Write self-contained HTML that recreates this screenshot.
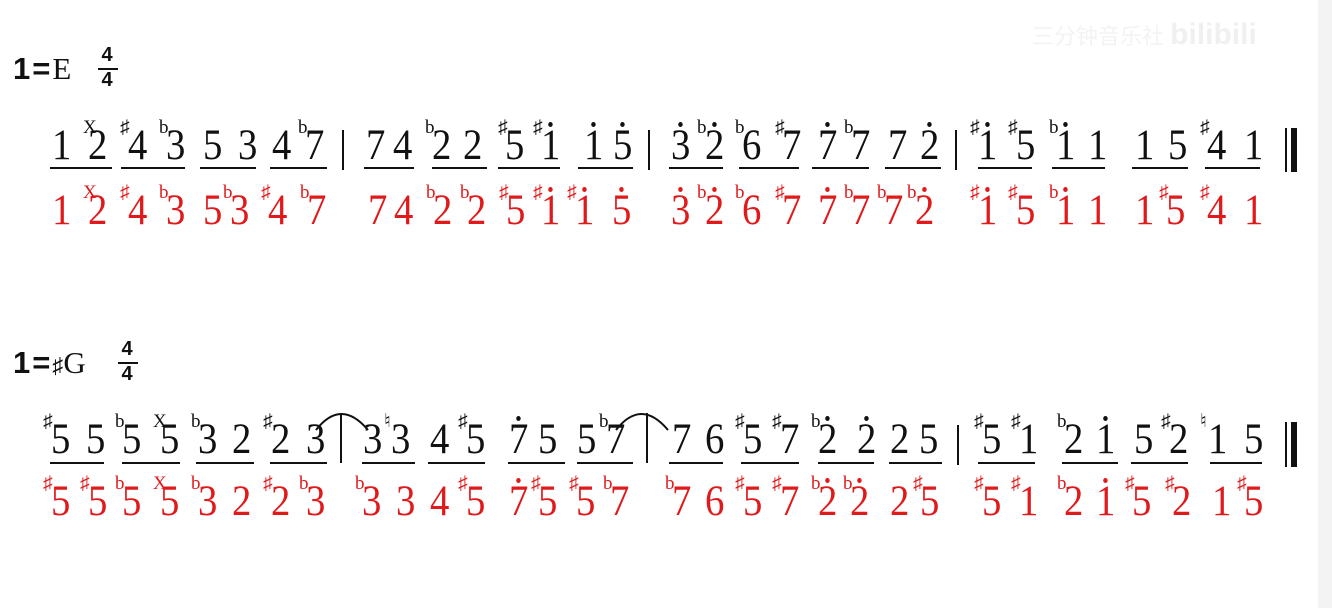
<!DOCTYPE html>
<html><head><meta charset="utf-8"><style>
html,body{margin:0;padding:0}
body{width:1332px;height:608px;background:#fff;position:relative;overflow:hidden;font-family:"Liberation Serif",serif}
.edge{position:absolute;left:1318px;top:0;width:14px;height:608px;background:#f3f3f3}
.n{position:absolute;font-size:43px;line-height:40px;font-style:normal;transform:scaleX(0.9);transform-origin:left top}
.r .n{color:#e0191b}
.k .n{color:#111}
.a{position:absolute;font-size:19px;line-height:18px;font-weight:normal;text-decoration:none}
.k .a{color:#111}.r .a{color:#e0191b}
.d::after{content:"";position:absolute;left:50%;margin-left:-2.5px;top:-4px;width:5px;height:5px;border-radius:50%;background:currentColor}
.u{position:absolute;height:2px;background:#111}
.bar{position:absolute;width:2px;background:#111}
.hd{position:absolute;font-size:31px;line-height:30px;color:#111}
.hd b{letter-spacing:2px}
.fr{position:absolute;font-family:"Liberation Sans",sans-serif;font-weight:bold;font-size:20px;line-height:19px;color:#111;text-align:center;width:20px}
.k,.r{margin-top:-2px}
</style></head><body>
<div class="edge"></div>
<div style="position:absolute;left:1032px;top:18px;font-family:'Liberation Sans','Noto Sans CJK SC',sans-serif;font-size:22px;color:#f3f3f3">三分钟音乐社 <b style="font-size:30px;color:#f0f0f0">bilibili</b></div>

<div class="hd" style="left:13px;top:54px"><b style="font-family:'Liberation Sans',sans-serif">1=</b>E</div>
<div class="fr" style="left:97px;top:46px">4</div><div style="position:absolute;left:98px;top:68px;width:20px;height:2px;background:#111"></div><div class="fr" style="left:97px;top:71px">4</div>

<div class="hd" style="left:13px;top:348px"><b style="font-family:'Liberation Sans',sans-serif">1=</b><span style="font-size:22px">♯</span>G</div>
<div class="fr" style="left:117px;top:340px">4</div><div style="position:absolute;left:118px;top:362px;width:20px;height:2px;background:#111"></div><div class="fr" style="left:117px;top:365px">4</div>

<div class="k" style="position:absolute;left:0;top:128px">
<i class="n" style="left:52px">1</i>
<b class="a" style="left:83px;top:-7px">X</b><i class="n" style="left:88px">2</i>
<b class="a" style="left:120px;top:-7px">♯</b><i class="n" style="left:128px">4</i>
<b class="a" style="left:159px;top:-7px">b</b><i class="n" style="left:166px">3</i>
<i class="n" style="left:203px">5</i><i class="n" style="left:238px">3</i>
<i class="n" style="left:272px">4</i>
<b class="a" style="left:298px;top:-7px">b</b><i class="n" style="left:305px">7</i>
<i class="n" style="left:366px">7</i><i class="n" style="left:393px">4</i>
<b class="a" style="left:425px;top:-7px">b</b><i class="n" style="left:432px">2</i>
<i class="n" style="left:463px">2</i>
<b class="a" style="left:498px;top:-7px">♯</b><i class="n" style="left:505px">5</i>
<b class="a" style="left:533px;top:-7px">♯</b><i class="n d" style="left:541px">1</i>
<i class="n d" style="left:584px">1</i><i class="n d" style="left:613px">5</i>
<i class="n d" style="left:671px">3</i>
<b class="a" style="left:697px;top:-7px">b</b><i class="n d" style="left:705px">2</i>
<b class="a" style="left:735px;top:-7px">b</b><i class="n" style="left:742px">6</i>
<b class="a" style="left:775px;top:-7px">♯</b><i class="n" style="left:782px">7</i>
<i class="n d" style="left:818px">7</i>
<b class="a" style="left:844px;top:-7px">b</b><i class="n" style="left:851px">7</i>
<i class="n" style="left:888px">7</i><i class="n d" style="left:920px">2</i>
<b class="a" style="left:970px;top:-7px">♯</b><i class="n d" style="left:978px">1</i>
<b class="a" style="left:1008px;top:-7px">♯</b><i class="n" style="left:1016px">5</i>
<b class="a" style="left:1049px;top:-7px">b</b><i class="n d" style="left:1056px">1</i>
<i class="n" style="left:1088px">1</i>
<i class="n" style="left:1135px">1</i><i class="n" style="left:1168px">5</i>
<b class="a" style="left:1200px;top:-7px">♯</b><i class="n" style="left:1207px">4</i>
<i class="n" style="left:1244px">1</i>
</div>
<div class="u" style="left:50px;top:167px;width:62px"></div>
<div class="u" style="left:121px;top:167px;width:64px"></div>
<div class="u" style="left:200px;top:167px;width:56px"></div>
<div class="u" style="left:270px;top:167px;width:57px"></div>
<div class="u" style="left:364px;top:167px;width:50px"></div>
<div class="u" style="left:432px;top:167px;width:55px"></div>
<div class="u" style="left:498px;top:167px;width:62px"></div>
<div class="u" style="left:578px;top:167px;width:55px"></div>
<div class="u" style="left:669px;top:167px;width:54px"></div>
<div class="u" style="left:739px;top:167px;width:60px"></div>
<div class="u" style="left:812px;top:167px;width:57px"></div>
<div class="u" style="left:885px;top:167px;width:56px"></div>
<div class="u" style="left:978px;top:167px;width:54px"></div>
<div class="u" style="left:1052px;top:167px;width:53px"></div>
<div class="u" style="left:1132px;top:167px;width:56px"></div>
<div class="u" style="left:1205px;top:167px;width:55px"></div>
<div class="bar" style="left:342px;top:130px;height:40px"></div>
<div class="bar" style="left:648px;top:130px;height:40px"></div>
<div class="bar" style="left:955px;top:130px;height:40px"></div>
<div class="bar" style="left:1285px;top:128px;height:44px"></div>
<div class="bar" style="left:1291px;top:128px;height:44px;width:6px"></div>

<div class="r" style="position:absolute;left:0;top:193px">
<i class="n" style="left:52px">1</i>
<b class="a" style="left:83px;top:-7px">X</b><i class="n" style="left:88px">2</i>
<b class="a" style="left:120px;top:-7px">♯</b><i class="n" style="left:128px">4</i>
<b class="a" style="left:159px;top:-7px">b</b><i class="n" style="left:166px">3</i>
<i class="n" style="left:203px">5</i>
<b class="a" style="left:223px;top:-7px">b</b><i class="n" style="left:230px">3</i>
<b class="a" style="left:261px;top:-7px">♯</b><i class="n" style="left:268px">4</i>
<b class="a" style="left:300px;top:-7px">b</b><i class="n" style="left:307px">7</i>
<i class="n" style="left:368px">7</i><i class="n" style="left:394px">4</i>
<b class="a" style="left:426px;top:-7px">b</b><i class="n" style="left:433px">2</i>
<b class="a" style="left:460px;top:-7px">b</b><i class="n" style="left:467px">2</i>
<b class="a" style="left:499px;top:-7px">♯</b><i class="n" style="left:506px">5</i>
<b class="a" style="left:533px;top:-7px">♯</b><i class="n d" style="left:541px">1</i>
<b class="a" style="left:567px;top:-7px">♯</b><i class="n d" style="left:575px">1</i>
<i class="n d" style="left:612px">5</i>
<i class="n d" style="left:671px">3</i>
<b class="a" style="left:697px;top:-7px">b</b><i class="n d" style="left:705px">2</i>
<b class="a" style="left:735px;top:-7px">b</b><i class="n" style="left:742px">6</i>
<b class="a" style="left:775px;top:-7px">♯</b><i class="n" style="left:782px">7</i>
<i class="n d" style="left:818px">7</i>
<b class="a" style="left:844px;top:-7px">b</b><i class="n" style="left:851px">7</i>
<b class="a" style="left:877px;top:-7px">b</b><i class="n" style="left:884px">7</i>
<b class="a" style="left:907px;top:-7px">b</b><i class="n d" style="left:915px">2</i>
<b class="a" style="left:970px;top:-7px">♯</b><i class="n d" style="left:978px">1</i>
<b class="a" style="left:1008px;top:-7px">♯</b><i class="n" style="left:1016px">5</i>
<b class="a" style="left:1049px;top:-7px">b</b><i class="n d" style="left:1056px">1</i>
<i class="n" style="left:1088px">1</i>
<i class="n" style="left:1135px">1</i>
<b class="a" style="left:1159px;top:-7px">♯</b><i class="n" style="left:1166px">5</i>
<b class="a" style="left:1200px;top:-7px">♯</b><i class="n" style="left:1207px">4</i>
<i class="n" style="left:1244px">1</i>
</div>

<div class="k" style="position:absolute;left:0;top:422px">
<b class="a" style="left:43px;top:-7px">♯</b><i class="n" style="left:51px">5</i>
<i class="n" style="left:86px">5</i>
<b class="a" style="left:115px;top:-7px">b</b><i class="n" style="left:122px">5</i>
<b class="a" style="left:153px;top:-7px">X</b><i class="n" style="left:160px">5</i>
<b class="a" style="left:191px;top:-7px">b</b><i class="n" style="left:198px">3</i>
<i class="n" style="left:232px">2</i>
<b class="a" style="left:263px;top:-7px">♯</b><i class="n" style="left:271px">2</i>
<i class="n" style="left:306px">3</i>
<i class="n" style="left:363px">3</i>
<b class="a" style="left:384px;top:-7px">♮</b><i class="n" style="left:391px">3</i>
<i class="n" style="left:430px">4</i>
<b class="a" style="left:458px;top:-7px">♯</b><i class="n" style="left:466px">5</i>
<i class="n d" style="left:509px">7</i><i class="n" style="left:538px">5</i>
<i class="n" style="left:577px">5</i>
<b class="a" style="left:599px;top:-7px">b</b><i class="n" style="left:606px">7</i>
<i class="n" style="left:672px">7</i><i class="n" style="left:705px">6</i>
<b class="a" style="left:735px;top:-7px">♯</b><i class="n" style="left:743px">5</i>
<b class="a" style="left:772px;top:-7px">♯</b><i class="n" style="left:780px">7</i>
<b class="a" style="left:811px;top:-7px">b</b><i class="n d" style="left:818px">2</i>
<i class="n d" style="left:857px">2</i>
<i class="n" style="left:890px">2</i><i class="n" style="left:919px">5</i>
<b class="a" style="left:974px;top:-7px">♯</b><i class="n" style="left:982px">5</i>
<b class="a" style="left:1011px;top:-7px">♯</b><i class="n" style="left:1019px">1</i>
<b class="a" style="left:1057px;top:-7px">b</b><i class="n" style="left:1064px">2</i>
<i class="n d" style="left:1096px">1</i>
<i class="n" style="left:1134px">5</i>
<b class="a" style="left:1161px;top:-7px">♯</b><i class="n" style="left:1169px">2</i>
<b class="a" style="left:1200px;top:-7px">♮</b><i class="n" style="left:1208px">1</i>
<i class="n" style="left:1244px">5</i>
</div>
<svg style="position:absolute;left:0;top:0" width="1332" height="608">
<path d="M316 430 Q341 398 368 430" fill="none" stroke="#111" stroke-width="2"/>
<path d="M616 430 Q641 398 668 430" fill="none" stroke="#111" stroke-width="2"/>
</svg>
<div class="bar" style="left:340px;top:413px;height:50px"></div>
<div class="bar" style="left:646px;top:413px;height:50px"></div>
<div class="u" style="left:50px;top:462px;width:54px"></div>
<div class="u" style="left:122px;top:462px;width:58px"></div>
<div class="u" style="left:196px;top:462px;width:58px"></div>
<div class="u" style="left:270px;top:462px;width:57px"></div>
<div class="u" style="left:362px;top:462px;width:53px"></div>
<div class="u" style="left:428px;top:462px;width:57px"></div>
<div class="u" style="left:508px;top:462px;width:57px"></div>
<div class="u" style="left:577px;top:462px;width:56px"></div>
<div class="u" style="left:669px;top:462px;width:54px"></div>
<div class="u" style="left:741px;top:462px;width:58px"></div>
<div class="u" style="left:818px;top:462px;width:56px"></div>
<div class="u" style="left:889px;top:462px;width:53px"></div>
<div class="u" style="left:978px;top:462px;width:57px"></div>
<div class="u" style="left:1062px;top:462px;width:56px"></div>
<div class="u" style="left:1131px;top:462px;width:57px"></div>
<div class="u" style="left:1210px;top:462px;width:52px"></div>
<div class="bar" style="left:957px;top:425px;height:40px"></div>
<div class="bar" style="left:1285px;top:422px;height:45px"></div>
<div class="bar" style="left:1291px;top:422px;height:45px;width:6px"></div>

<div class="r" style="position:absolute;left:0;top:484px">
<b class="a" style="left:43px;top:-7px">♯</b><i class="n" style="left:51px">5</i>
<b class="a" style="left:80px;top:-7px">♯</b><i class="n" style="left:88px">5</i>
<b class="a" style="left:115px;top:-7px">b</b><i class="n" style="left:122px">5</i>
<b class="a" style="left:153px;top:-7px">X</b><i class="n" style="left:160px">5</i>
<b class="a" style="left:191px;top:-7px">b</b><i class="n" style="left:198px">3</i>
<i class="n" style="left:232px">2</i>
<b class="a" style="left:263px;top:-7px">♯</b><i class="n" style="left:271px">2</i>
<b class="a" style="left:299px;top:-7px">b</b><i class="n" style="left:306px">3</i>
<b class="a" style="left:355px;top:-7px">b</b><i class="n" style="left:362px">3</i>
<i class="n" style="left:396px">3</i><i class="n" style="left:430px">4</i>
<b class="a" style="left:458px;top:-7px">♯</b><i class="n" style="left:466px">5</i>
<i class="n d" style="left:509px">7</i>
<b class="a" style="left:531px;top:-7px">♯</b><i class="n" style="left:538px">5</i>
<b class="a" style="left:569px;top:-7px">♯</b><i class="n" style="left:576px">5</i>
<b class="a" style="left:603px;top:-7px">b</b><i class="n" style="left:610px">7</i>
<b class="a" style="left:665px;top:-7px">b</b><i class="n" style="left:672px">7</i>
<i class="n" style="left:705px">6</i>
<b class="a" style="left:735px;top:-7px">♯</b><i class="n" style="left:743px">5</i>
<b class="a" style="left:772px;top:-7px">♯</b><i class="n" style="left:780px">7</i>
<b class="a" style="left:811px;top:-7px">b</b><i class="n d" style="left:818px">2</i>
<b class="a" style="left:843px;top:-7px">b</b><i class="n d" style="left:850px">2</i>
<i class="n" style="left:890px">2</i>
<b class="a" style="left:913px;top:-7px">♯</b><i class="n" style="left:920px">5</i>
<b class="a" style="left:974px;top:-7px">♯</b><i class="n" style="left:982px">5</i>
<b class="a" style="left:1011px;top:-7px">♯</b><i class="n" style="left:1019px">1</i>
<b class="a" style="left:1057px;top:-7px">b</b><i class="n" style="left:1064px">2</i>
<i class="n d" style="left:1096px">1</i>
<b class="a" style="left:1125px;top:-7px">♯</b><i class="n" style="left:1132px">5</i>
<b class="a" style="left:1165px;top:-7px">♯</b><i class="n" style="left:1172px">2</i>
<i class="n" style="left:1212px">1</i>
<b class="a" style="left:1237px;top:-7px">♯</b><i class="n" style="left:1244px">5</i>
</div>
</body></html>
